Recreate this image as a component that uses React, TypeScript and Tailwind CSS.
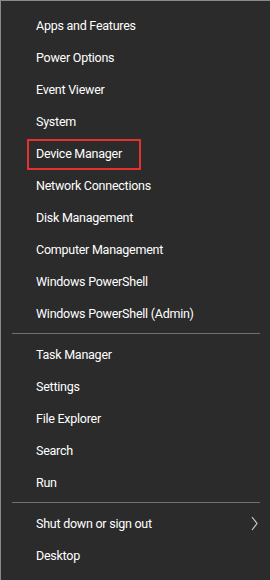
import React from "react";

const group1 = [
  "Apps and Features",
  "Power Options",
  "Event Viewer",
  "System",
  "Device Manager",
  "Network Connections",
  "Disk Management",
  "Computer Management",
  "Windows PowerShell",
  "Windows PowerShell (Admin)",
];
const group2 = ["Task Manager", "Settings", "File Explorer", "Search", "Run"];

function Item({ label, highlight, arrow }: { label: string; highlight?: boolean; arrow?: boolean }) {
  return (
    <div className="relative flex h-[32px] items-center pl-[35px] pr-[12px] pt-[2px] text-[12.5px] tracking-[-0.25px] text-white">
      <span>{label}</span>
      {highlight && (
        <div className="absolute left-[26px] top-[2px] h-[31px] w-[114px] border-2 border-[#e5302d]" />
      )}
      {arrow && (
        <svg className="ml-auto -mt-[2px]" width="7" height="15" viewBox="0 0 7 15">
          <path d="M1 1 L6 7.5 L1 14" fill="none" stroke="#c9c9c9" strokeWidth="1.2" />
        </svg>
      )}
    </div>
  );
}

function Sep() {
  return <div className="ml-[11px] mr-[10px] mt-[4px] mb-[4px] h-px bg-[#707070]" />;
}

export default function App() {
  return (
    <div
      className="h-[580px] w-[270px] overflow-hidden border-l border-t border-[#8a8a8a] bg-[#2b2b2b] pt-[8px]"
      style={{ fontFamily: 'Roboto, "Noto Sans", sans-serif' }}
    >
      {group1.map((l) => (
        <Item key={l} label={l} highlight={l === "Device Manager"} />
      ))}
      <Sep />
      {group2.map((l) => (
        <Item key={l} label={l} />
      ))}
      <Sep />
      <Item label="Shut down or sign out" arrow />
      <Item label="Desktop" />
    </div>
  );
}
